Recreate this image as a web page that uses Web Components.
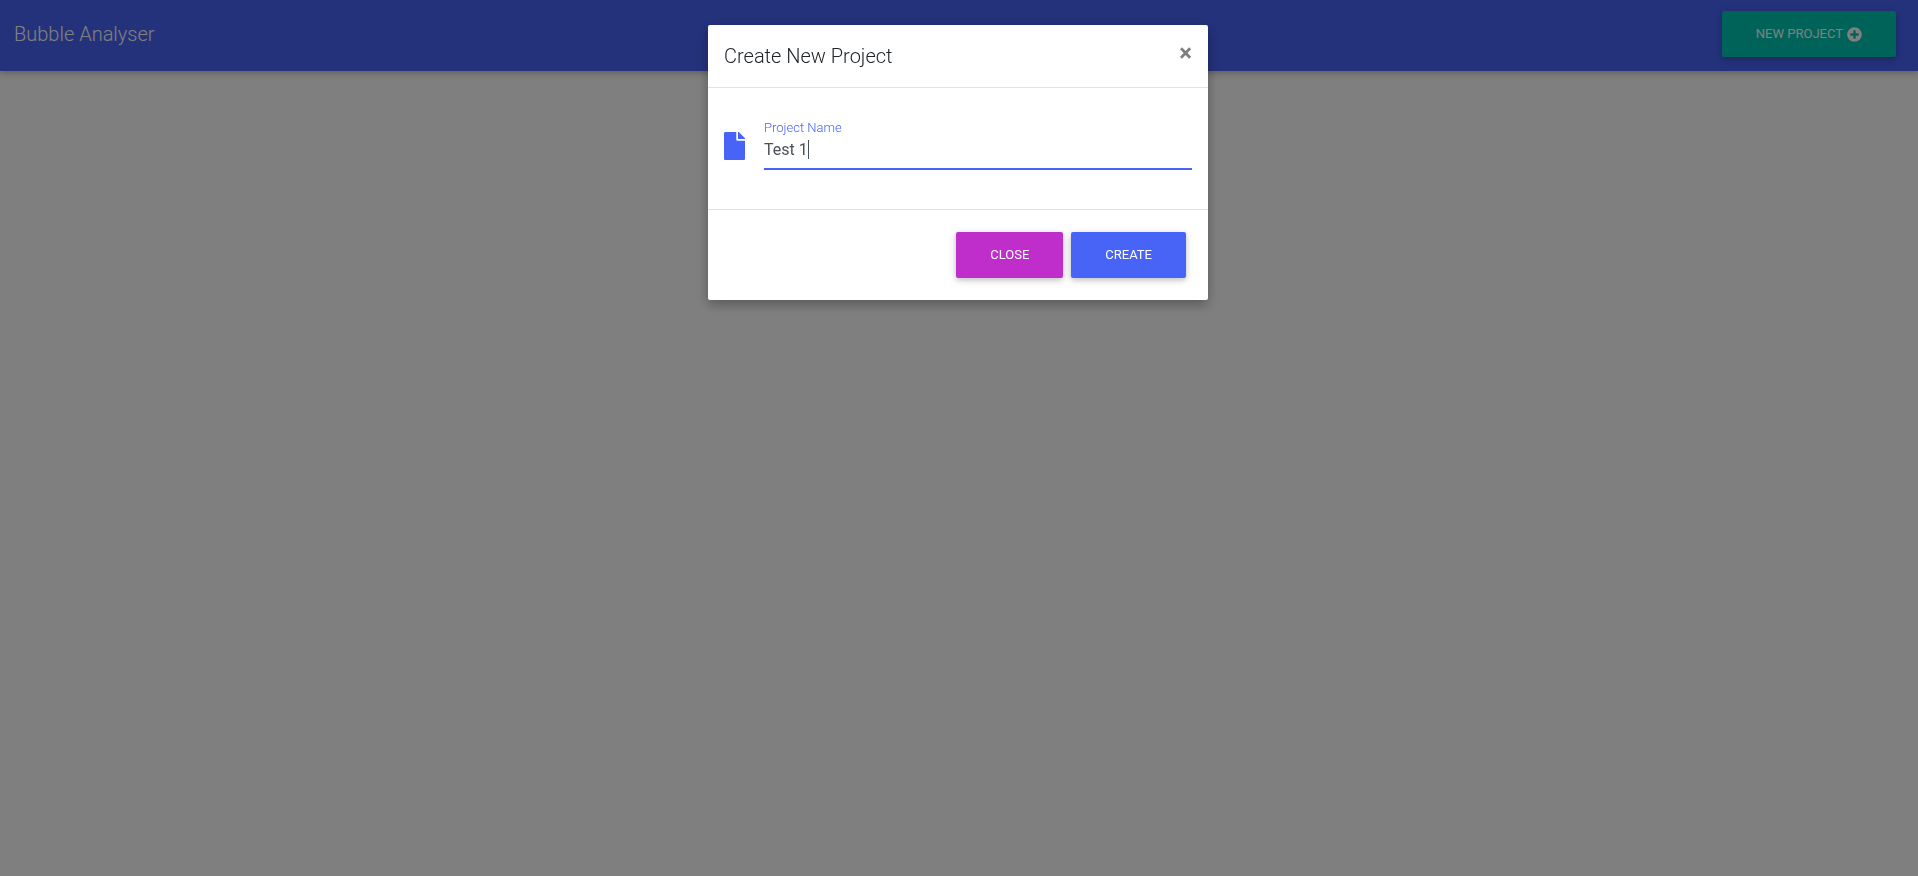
<!DOCTYPE html>
<html lang="en">
<head>
<meta charset="utf-8">
<meta name="viewport" content="width=device-width, initial-scale=1">
<title>Bubble Analyser</title>
<style>
  body {
    --primary: #4864f6;
    --secondary: #bf2ecb;
    --accent: #00c7b2;
    margin: 0;
    min-height: 100vh;
    background: #fff;
    color: #212529;
    font: 300 16px/24px Roboto, "Liberation Sans", sans-serif;
  }
</style>
</head>
<body>
<bubble-app></bubble-app>

<script>
const define = (name, html) => {
  const template = document.createElement("template");
  template.innerHTML = html;
  customElements.define(name, class extends HTMLElement {
    constructor() {
      super();
      this.attachShadow({ mode: "open" }).append(template.content.cloneNode(true));
    }
  });
};

define("raised-button", `
  <style>
    :host { display: block; --fill: var(--primary); }
    :host([tone="secondary"]) { --fill: var(--secondary); }
    :host([tone="accent"]) { --fill: var(--accent); }
    button {
      display: flex; align-items: center; gap: 4px;
      height: 46px; padding: 0 34px;
      border: 0; border-radius: 2px;
      background: var(--fill); color: #fff;
      font: 400 13px/20px Roboto, "Liberation Sans", sans-serif;
      text-transform: uppercase; white-space: nowrap; cursor: pointer;
      box-shadow: 0 2px 5px rgba(0,0,0,.16), 0 2px 10px rgba(0,0,0,.12);
    }
  </style>
  <button type="button"><slot></slot></button>
`);

define("nav-bar", `
  <style>
    :host {
      display: flex; align-items: center; justify-content: space-between;
      box-sizing: border-box; height: 71px; padding: 0 22px 3px 14px;
      background: var(--primary); color: #fff;
      box-shadow: 0 2px 5px rgba(0,0,0,.16), 0 2px 10px rgba(0,0,0,.12);
    }
    a { color: inherit; text-decoration: none; font-size: 20px; line-height: 30px; }
  </style>
  <a href="#"><slot name="brand"></slot></a>
  <slot></slot>
`);

define("text-field", `
  <style>
    :host { display: grid; grid-template-columns: 40px 1fr; align-items: center; }
    ::slotted(svg) { margin-top: 4px; }
    .field { display: flex; flex-direction: column; }
    label { color: var(--primary); font-size: 13px; line-height: 20px; }
    input {
      box-sizing: border-box; width: 100%; height: 32px; padding: 0 0 8px;
      border: 0; border-bottom: 2px solid var(--primary); border-radius: 0; outline: 0;
      color: #495057; caret-color: transparent;
      background: linear-gradient(#495057, #495057) 44px 2px / 1px 19px no-repeat;
      font: 400 16px/22px Roboto, "Liberation Sans", sans-serif;
    }
  </style>
  <slot name="icon"></slot>
  <div class="field">
    <label for="name">Project Name</label>
    <input id="name" type="text" value="Test 1" autocomplete="off" spellcheck="false">
  </div>
`);

define("modal-dialog", `
  <style>
    :host {
      position: fixed; inset: 0; z-index: 10; overflow: auto;
      display: flex; align-items: flex-start; justify-content: center;
      box-sizing: border-box; padding: 25px 2px 25px 0;
      background: rgba(0,0,0,.5);
    }
    section {
      width: 100%; max-width: 500px; border-radius: 2px; background: #fff;
      box-shadow: 0 5px 11px rgba(0,0,0,.18), 0 4px 15px rgba(0,0,0,.15);
    }
    header {
      display: flex; justify-content: space-between; align-items: flex-start;
      padding: 16px; border-bottom: 1px solid #dee2e6;
    }
    h4 { margin: 0; font-size: 20px; line-height: 30px; font-weight: 300; }
    .dismiss {
      padding: 0; border: 0; background: none; color: #000; opacity: .5; cursor: pointer;
      font: 700 24px/24px Roboto, "Liberation Sans", sans-serif;
      text-shadow: 0 1px 0 #fff;
    }
    .body { padding: 30px 16px 39px; }
    footer {
      display: flex; justify-content: flex-end; gap: 8px;
      padding: 22px; border-top: 1px solid #dee2e6;
    }
  </style>
  <section role="dialog" aria-modal="true" aria-labelledby="title">
    <header>
      <h4 id="title"><slot name="title"></slot></h4>
      <button class="dismiss" type="button" aria-label="Close">×</button>
    </header>
    <div class="body"><slot></slot></div>
    <footer><slot name="actions"></slot></footer>
  </section>
`);

define("bubble-app", `
  <style>
    :host { display: block; }
    svg { display: block; fill: currentColor; }
    .file { width: 21px; height: 28px; color: var(--primary); }
    .plus { width: 15px; height: 15px; }
  </style>
  <nav-bar>
    <span slot="brand">Bubble Analyser</span>
    <raised-button tone="accent">New Project
      <svg class="plus" viewBox="0 0 512 512" aria-hidden="true"><path d="M256 8C119 8 8 119 8 256s111 248 248 248 248-111 248-248S393 8 256 8zm144 276c0 6.600-5.400 12-12 12h-92v92c0 6.600-5.400 12-12 12h-56c-6.600 0-12-5.400-12-12v-92h-92c-6.600 0-12-5.400-12-12v-56c0-6.600 5.400-12 12-12h92v-92c0-6.600 5.400-12 12-12h56c6.600 0 12 5.400 12 12v92h92c6.600 0 12 5.400 12 12v56z"/></svg>
    </raised-button>
  </nav-bar>
  <modal-dialog>
    <span slot="title">Create New Project</span>
    <text-field>
      <svg slot="icon" class="file" viewBox="0 0 384 512" aria-hidden="true"><path d="M224 136V0H24C10.700 0 0 10.700 0 24v464c0 13.300 10.700 24 24 24h336c13.300 0 24-10.700 24-24V160H248c-13.200 0-24-10.800-24-24zm160-14.100v6.100H256V0h6.100c6.400 0 12.500 2.500 17 7l97.900 98c4.500 4.500 7 10.600 7 16.900z"/></svg>
    </text-field>
    <raised-button slot="actions" tone="secondary">Close</raised-button>
    <raised-button slot="actions">Create</raised-button>
  </modal-dialog>
`);
</script>
</body>
</html>
